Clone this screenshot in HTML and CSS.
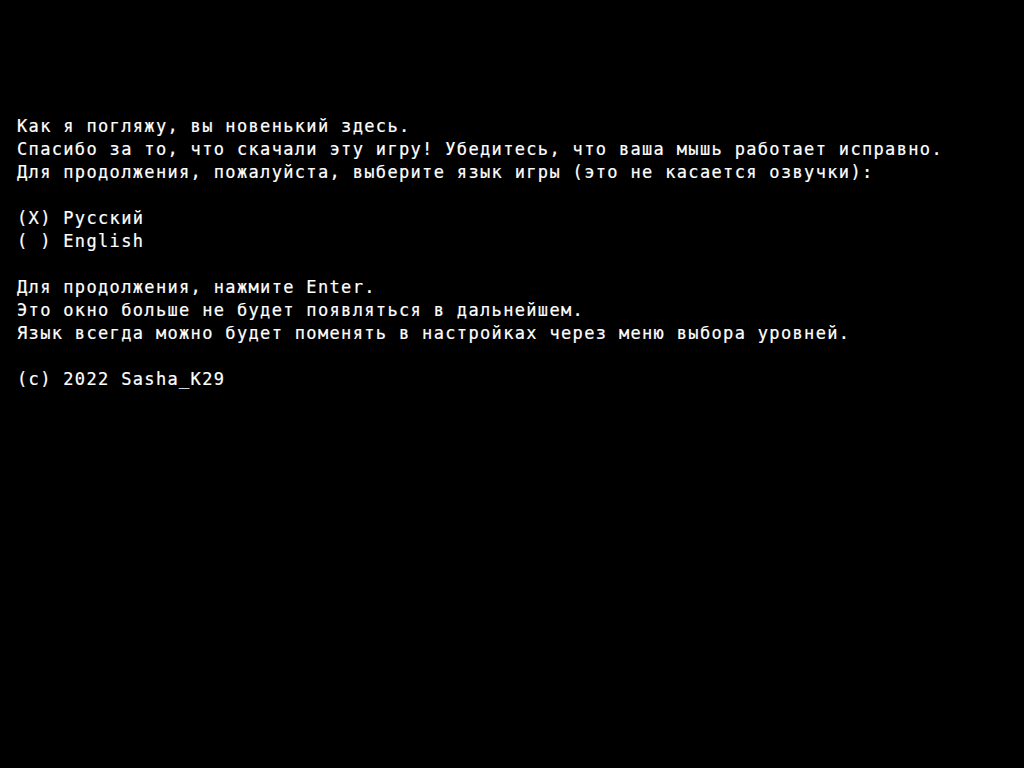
FILE: index.html
```html
<!DOCTYPE html>
<html lang="ru">
<head>
<meta charset="utf-8">
<title>Language</title>
<link rel="stylesheet" href="styles.css">
</head>
<body>
<main class="console">
<p class="line">Как я погляжу, вы новенький здесь.</p>
<p class="line">Спасибо за то, что скачали эту игру! Убедитесь, что ваша мышь работает исправно.</p>
<p class="line">Для продолжения, пожалуйста, выберите язык игры (это не касается озвучки):</p>
<p class="line blank">&nbsp;</p>
<p class="line">(X) Русский</p>
<p class="line">( ) English</p>
<p class="line blank">&nbsp;</p>
<p class="line">Для продолжения, нажмите Enter.</p>
<p class="line">Это окно больше не будет появляться в дальнейшем.</p>
<p class="line">Язык всегда можно будет поменять в настройках через меню выбора уровней.</p>
<p class="line blank">&nbsp;</p>
<p class="line">(c) 2022 Sasha_K29</p>
</main>
</body>
</html>
```

FILE: styles.css
```css
html, body {
  margin: 0;
  padding: 0;
  background: #000;
  height: 100%;
}
.console {
  padding: 115px 0 0 17px;
  color: #fff;
  font-family: "DejaVu Sans Mono", monospace;
  font-size: 17px;
  letter-spacing: 1.34px;
  line-height: 23px;
  -webkit-text-stroke: 0.2px #fff;
}
.line {
  margin: 0;
  white-space: pre;
}
```
